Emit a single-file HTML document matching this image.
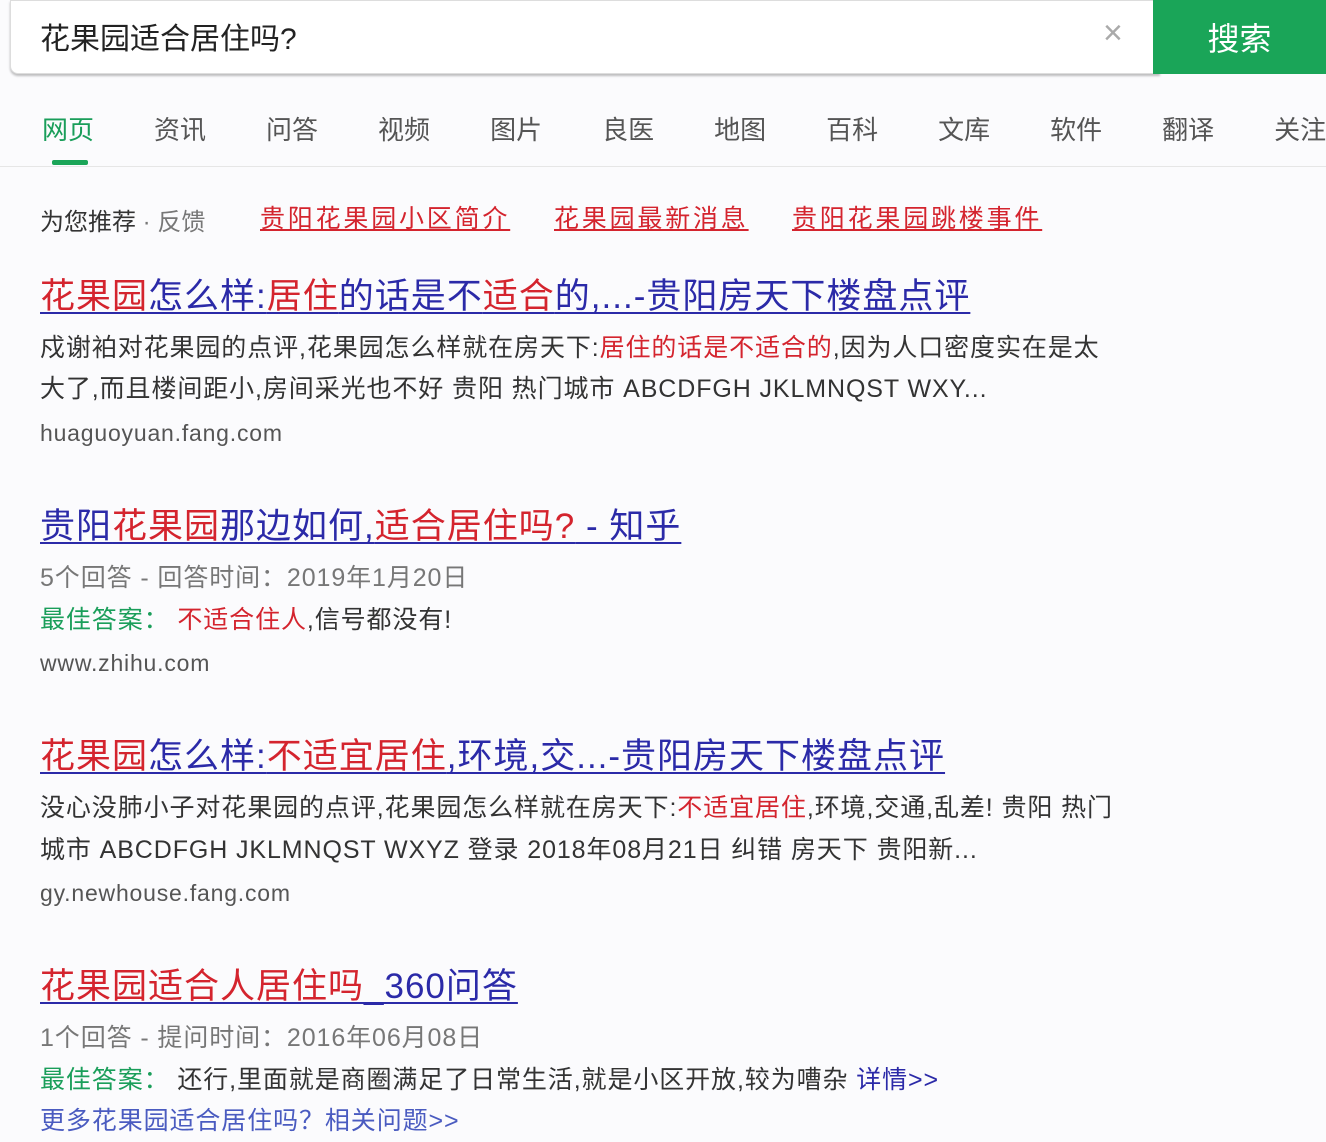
<!DOCTYPE html>
<html><head><meta charset="utf-8"><style>
*{margin:0;padding:0;box-sizing:border-box}
body{width:1326px;height:1142px;background:#fbfbfd;font-family:"Liberation Sans","Noto Sans CJK SC",sans-serif;position:relative;overflow:hidden;color:#333}
.a{position:absolute;white-space:nowrap}
.r{color:#d4242e}.b{color:#2b2aa8}.g{color:#1a9e5a}.gr{color:#777}
.t{font-size:35px;letter-spacing:1px;text-decoration:underline;text-decoration-thickness:2px;text-underline-offset:4px}
.d{font-size:25px;color:#333;letter-spacing:0.9px}
.u{font-size:23px;color:#555;letter-spacing:0.8px}
</style></head><body>
<div class="a" style="left:10px;top:0;width:1150px;height:74px;background:#fff;border:1px solid #ddd;border-radius:0 0 0 8px;box-shadow:0 2px 2px rgba(0,0,0,.25)"></div>
<div class="a" style="left:40px;top:14px;font-size:30px;color:#222">花果园适合居住吗?</div>
<div class="a" style="left:1103px;top:14px;font-size:34px;color:#aaa;font-weight:200">×</div>
<div class="a" style="left:1153px;top:0;width:173px;height:74px;background:#1aa558;color:#fff;font-size:32px;text-align:center;line-height:78px">搜索</div>
<div class="a" style="left:42px;top:110px;font-size:26px;color:#555;word-spacing:0">
<span class="g">网页</span><span style="margin-left:60px">资讯</span><span style="margin-left:60px">问答</span><span style="margin-left:60px">视频</span><span style="margin-left:60px">图片</span><span style="margin-left:60px">良医</span><span style="margin-left:60px">地图</span><span style="margin-left:60px">百科</span><span style="margin-left:60px">文库</span><span style="margin-left:60px">软件</span><span style="margin-left:60px">翻译</span><span style="margin-left:60px">关注</span></div>
<div class="a" style="left:52px;top:160px;width:36px;height:5px;background:#1aa558;border-radius:2px"></div>
<div class="a" style="left:0;top:166px;width:1326px;height:1px;background:#e6e6e6"></div>
<div class="a" style="left:40px;top:202px;font-size:24px;color:#333">为您推荐 <span class="gr">· 反馈</span></div>
<div class="a r" style="left:260px;top:199px;font-size:25px;letter-spacing:2.8px;text-decoration:underline">贵阳花果园小区简介</div>
<div class="a r" style="left:554px;top:199px;font-size:25px;letter-spacing:2.8px;text-decoration:underline">花果园最新消息</div>
<div class="a r" style="left:792px;top:199px;font-size:25px;letter-spacing:2.8px;text-decoration:underline">贵阳花果园跳楼事件</div>

<div class="a t b" style="left:40px;top:268px"><span class="r">花果园</span>怎么样:<span class="r">居住</span>的话是不<span class="r">适合</span>的,...-贵阳房天下楼盘点评</div>
<div class="a d" style="left:40px;top:328px">戍谢袙对花果园的点评,花果园怎么样就在房天下:<span class="r">居住的话是不适合的</span>,因为人口密度实在是太</div>
<div class="a d" style="left:40px;top:369px">大了,而且楼间距小,房间采光也不好 贵阳 热门城市 ABCDFGH JKLMNQST WXY...</div>
<div class="a u" style="left:40px;top:420px">huaguoyuan.fang.com</div>

<div class="a t b" style="left:40px;top:498px">贵阳<span class="r">花果园</span>那边如何,<span class="r">适合居住吗?</span> - 知乎</div>
<div class="a d gr" style="left:40px;top:558px;color:#777">5个回答 - 回答时间：2019年1月20日</div>
<div class="a d" style="left:40px;top:600px"><span class="g">最佳答案：</span> <span class="r">不适合住人</span>,信号都没有!</div>
<div class="a u" style="left:40px;top:650px">www.zhihu.com</div>

<div class="a t b" style="left:40px;top:728px"><span class="r">花果园</span>怎么样:<span class="r">不适宜居住</span>,环境,交...-贵阳房天下楼盘点评</div>
<div class="a d" style="left:40px;top:788px">没心没肺小子对花果园的点评,花果园怎么样就在房天下:<span class="r">不适宜居住</span>,环境,交通,乱差! 贵阳 热门</div>
<div class="a d" style="left:40px;top:830px">城市 ABCDFGH JKLMNQST WXYZ 登录 2018年08月21日 纠错 房天下 贵阳新...</div>
<div class="a u" style="left:40px;top:880px">gy.newhouse.fang.com</div>

<div class="a t b" style="left:40px;top:958px"><span class="r">花果园适合人居住吗</span>_360问答</div>
<div class="a d" style="left:40px;top:1018px;color:#777">1个回答 - 提问时间：2016年06月08日</div>
<div class="a d" style="left:40px;top:1060px"><span class="g">最佳答案：</span> 还行,里面就是商圈满足了日常生活,就是小区开放,较为嘈杂 <span class="b">详情&gt;&gt;</span></div>
<div class="a d" style="left:40px;top:1101px;color:#4a5bc0">更多花果园适合居住吗？相关问题&gt;&gt;</div>
</body></html>
